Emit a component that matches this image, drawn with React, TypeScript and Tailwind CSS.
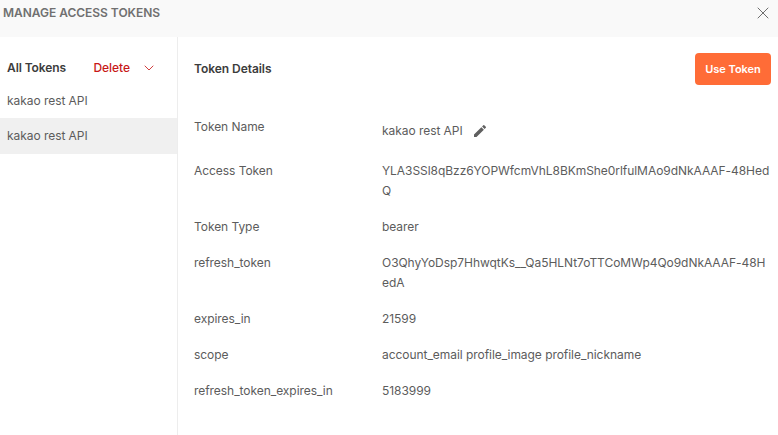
import { ChevronDown, X } from "lucide-react"

const ROWS = [
  { label: "Access Token", value: "YLA3SSl8qBzz6YOPWfcmVhL8BKmShe0rlfulMAo9dNkAAAF-48HedQ", h: "h-[56px]" },
  { label: "Token Type", value: "bearer", h: "h-[36px]" },
  { label: "refresh_token", value: "O3QhyYoDsp7HhwqtKs__Qa5HLNt7oTTCoMWp4Qo9dNkAAAF-48HedA", h: "h-[56px]" },
  { label: "expires_in", value: "21599", h: "h-[36px]" },
  { label: "scope", value: "account_email profile_image profile_nickname", h: "h-[36px]" },
  { label: "refresh_token_expires_in", value: "5183999", h: "h-[36px]" },
]

export default function App() {
  return (
    <div className="flex h-[435px] w-[778px] flex-col overflow-hidden bg-white font-['Inter',sans-serif] text-[12px] leading-[20px] tracking-[-0.05px] text-[#5c5c5c]">
      <header className="flex h-[37px] shrink-0 items-start justify-between bg-[#f9f9f9] pl-[3px] pr-[5px]">
        <h1 className="pt-[3px] text-[12px] font-semibold tracking-[-0.03px] text-[#707070]">MANAGE ACCESS TOKENS</h1>
        <X className="mt-[3px] size-[20px] text-[#505050]" strokeWidth={1} />
      </header>

      <div className="flex min-h-0 flex-1">
        <aside className="w-[178px] shrink-0 border-r border-[#ededed]">
          <div className="flex h-[46px] items-end justify-between pb-[5px] pl-[7px] pr-[20px]">
            <span className="font-semibold tracking-[-0.1px] text-[#3c3c3c]">All Tokens</span>
            <span className="flex items-center gap-[11px] font-medium text-[#c81818]">
              Delete
              <ChevronDown className="size-[16px]" strokeWidth={1.25} />
            </span>
          </div>
          <div className="flex h-[35px] items-center pl-[7px]">kakao rest API</div>
          <div className="flex h-[36px] items-center bg-[#f0f0f0] pl-[7px]">kakao rest API</div>
        </aside>

        <main className="min-w-0 flex-1 pl-[16px] pr-[7px]">
          <div className="flex h-[80px] items-start justify-between pt-[16px]">
            <h2 className="pt-[6px] font-semibold text-[#3c3c3c]">Token Details</h2>
            <button className="h-[32px] w-[76px] rounded-[4px] bg-[#ff6c37] text-[11px] font-semibold text-white">
              Use Token
            </button>
          </div>

          <div className="flex h-[44px]">
            <span className="w-[188px] shrink-0">Token Name</span>
            <span className="flex items-center gap-[9px] self-start pt-[4px]">
              kakao rest API
              <svg viewBox="0 0 24 24" className="size-[16px] fill-[#606060]">
                <path d="M3 17.25V21h3.75L17.81 9.94l-3.75-3.75L3 17.25zM20.71 7.04a1 1 0 0 0 0-1.41l-2.34-2.34a1 1 0 0 0-1.41 0l-1.83 1.83 3.75 3.75 1.83-1.83z" />
              </svg>
            </span>
          </div>

          {ROWS.map((row) => (
            <div key={row.label} className={`flex ${row.h}`}>
              <span className="w-[188px] shrink-0">{row.label}</span>
              <span className="w-[388px] break-all">{row.value}</span>
            </div>
          ))}
        </main>
      </div>
    </div>
  )
}
